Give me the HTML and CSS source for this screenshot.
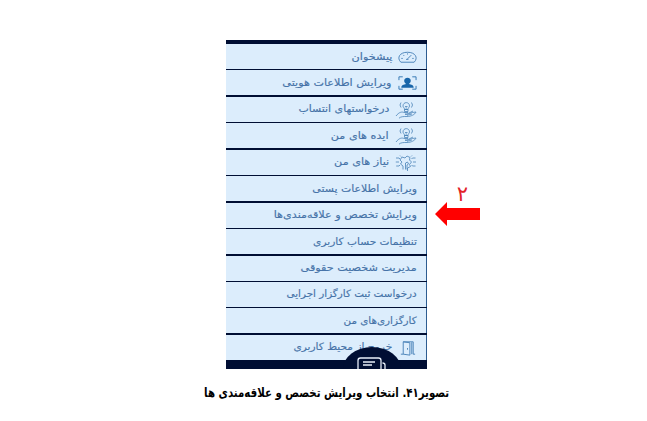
FILE: index.html
```
<!DOCTYPE html>
<html lang="fa" dir="rtl">
<head>
<meta charset="utf-8">
<title>انتخاب ویرایش تخصص و علاقه‌مندی ها</title>
<link rel="stylesheet" href="styles.css">
</head>
<body>
<svg class="defs" width="0" height="0" aria-hidden="true">
  <symbol id="idea" viewBox="0 0 22 18">
    <path d="M8 5C8 .5 14.500 .5 14.500 5C14.500 6.500 13 6.500 13 8.500H9.500C9.500 6.500 8 6.500 8 5Z"/>
    <path d="M9.500 8.500h3.500v2h-3.500zM10 5.500h2.500M10.500 7h1.500M6 1.500L5 4l1 2.500M16.500 1.500l1 2.500-1 2.500"/>
    <path d="M1 15C4 11 7 10.500 9 11.500H13C14 12.500 12.500 13.500 10 13.200C13 14 16 11 21 11C20 13.500 16 15.500 12 15.500C8 15.500 6 15.500 4 17.200M14 12l4-2M12 14.300l5-1.300"/>
  </symbol>
</svg>
<main class="figure">
  <nav class="menu">
    <a class="row"><svg class="icon" viewBox="0 0 20 16"><path d="M3 13.500C-1.500 9 1.500 3 10 3s11.500 6 7 10.500zM10 10l4-4M3.500 9.500h1.500M5.500 5.800l1 1M10 4.200v1.200M15 9.500h1.500M8.500 10.500h2.500"/></svg><span class="label">پیشخوان</span></a>
    <a class="row"><svg class="icon strong" viewBox="0 0 20 16"><path d="M1 5V1.500H5M15 1.500h4V5M1 11v3.500H5M15 14.500h4V11"/><path class="solid" d="M3.500 13C3.500 10 6 9.500 8.500 9C5.500 7 6 2.500 10 2.500s4.500 4.500 1.500 6.500c2.500.5 5 1 5 4z"/></svg><span class="label">ویرایش اطلاعات هویتی</span></a>
    <a class="row"><svg class="icon hand"><use href="#idea"/></svg><span class="label mid">درخواستهای انتساب</span></a>
    <a class="row"><svg class="icon hand"><use href="#idea"/></svg><span class="label">ایده های من</span></a>
    <a class="row"><svg class="icon hand" viewBox="0 0 22 18"><path d="M8 15.500V12L5.500 10 7 8 5 6l2-3 3 1 2-2 3 1.500-.5 2.500 2 2-2 2.500 1 2-3 1.500v3M10.500 15.500V9l2-1 1 2-1.500 1v4.500M1 4h3l1 1M.8 8H4M1.200 12H4l1-1M20.500 4h-3l-1 1M21 8h-3M20.500 12h-3l-1-1M5 1.500l1 1M17 1.500l-1 1"/></svg><span class="label">نیاز های من</span></a>
    <a class="row"><span class="label mid">ویرایش اطلاعات پستی</span></a>
    <a class="row"><span class="label">ویرایش تخصص و علاقه‌مندی‌ها</span></a>
    <a class="row"><span class="label snug">تنظیمات حساب کاربری</span></a>
    <a class="row"><span class="label">مدیریت شخصیت حقوقی</span></a>
    <a class="row"><span class="label tight">درخواست ثبت کارگزار اجرایی</span></a>
    <a class="row"><span class="label tight">کارگزاری‌های من</span></a>
    <a class="row"><svg class="icon" viewBox="0 0 20 16"><path d="M3 14.500h2.500V1.500h10.500v13h2M5.500 1.500l7 1v13l-7-1M14.500 2v12.500M10 8v1.800"/></svg><span class="label snug">خروج از محیط کاربری</span></a>
    <div class="chat"><svg viewBox="0 0 60 22"><ellipse cx="30" cy="22" rx="29" ry="22"/><path d="M16 22V13.500Q16 11 18.500 11H36.500Q39 11 39 13.500V22M21 15h12M21 18h9M40.500 16Q43 16 43 18V22"/></svg></div>
  </nav>
  <div class="pointer">
    <span class="step">۲</span>
    <svg class="arrow" viewBox="0 0 45 24"><path d="M0 12 12 0V6H45V18H12V24z"/></svg>
  </div>
  <p class="caption"><span class="caption-text">تصویر۴۱. انتخاب ویرایش تخصص و علاقه‌مندی ها</span></p>
</main>
</body>
</html>
```
FILE: styles.css
```
body { margin: 0; background: #fff; font-family: "DejaVu Sans", sans-serif; }
.defs { position: absolute; }
.figure {
  direction: ltr;
  display: grid;
  grid-template-columns: 201px 60px;
  grid-template-rows: 329px 46px;
  padding: 40px 0 0 226px;
}
.menu {
  direction: rtl;
  position: relative;
  box-sizing: border-box;
  height: 329px;
  overflow: hidden;
  padding-top: 4px;
  background: #000e33;
}
.row {
  box-sizing: border-box;
  height: 25px;
  margin-bottom: 1.450px;
  display: flex;
  align-items: center;
  gap: 6px;
  padding: 0 9px 0 0;
  background: #dcedfc;
  border-right: 1px solid #2c5c91;
  color: #4673a8;
}
.label {
  font-size: 10px;
  line-height: 16px;
  white-space: nowrap;
  transform: scaleX(1.120);
  transform-origin: right center;
  -webkit-text-stroke: .15px #4673a8;
}
.label.mid { transform: scaleX(1.090); }
.label.snug { transform: scaleX(1.060); }
.label.tight { transform: scaleX(1.035); }
.icon {
  width: 19px;
  height: 16px;
  flex: none;
  margin-top: 1px;
  fill: none;
  stroke: #4a83b8;
  stroke-width: 1;
}
.icon.strong { stroke: #3276b2; }
.icon.hand { width: 22px; height: 18px; stroke-width: .8; }
.solid { fill: #1966aa; stroke: none; }
.chat { position: absolute; left: 116px; bottom: 0; width: 60px; height: 22px; }
.chat svg { display: block; fill: #000e33; }
.chat path { fill: none; stroke: #e8f0fa; stroke-width: 1.300; }
.pointer { padding: 144px 0 0 8px; }
.step {
  display: block;
  width: 55px;
  height: 18px;
  text-align: center;
  font-size: 21px;
  line-height: 20px;
  color: #e32228;
}
.arrow { display: block; width: 45px; height: 24px; fill: #f00; }
.caption {
  direction: rtl;
  grid-column: 1 / 3;
  justify-self: start;
  margin: 14px 0 0 -22px;
  width: 245px;
  line-height: 20px;
  font-size: 13px;
  font-weight: bold;
  color: #000;
  white-space: nowrap;
}
.caption-text { display: inline-block; transform: scaleX(.785); transform-origin: right center; }
```
